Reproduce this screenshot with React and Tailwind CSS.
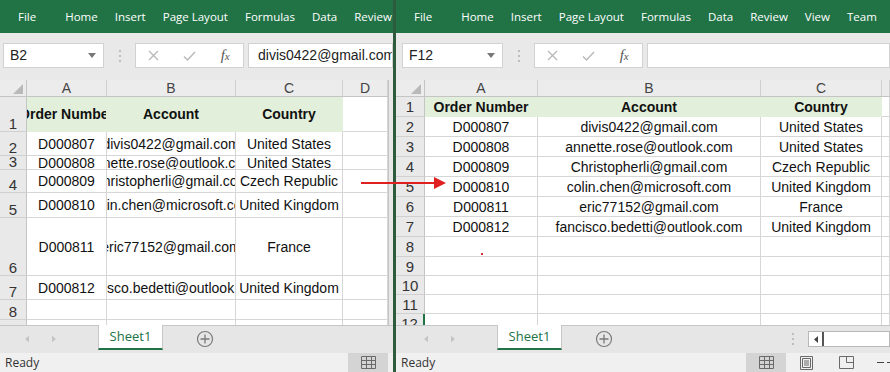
import React from "react";

const CELL = "font-['Liberation_Sans',Arial,sans-serif]";
const UI = "font-['Open_Sans','Noto_Sans',sans-serif]";

const records = [
  ["D000807", "divis0422@gmail.com", "United States"],
  ["D000808", "annette.rose@outlook.com", "United States"],
  ["D000809", "Christopherli@gmail.com", "Czech Republic"],
  ["D000810", "colin.chen@microsoft.com", "United Kingdom"],
  ["D000811", "eric77152@gmail.com", "France"],
  ["D000812", "fancisco.bedetti@outlook.com", "United Kingdom"],
];
const headings = ["Order Number", "Account", "Country"];

const leftCols = [
  { letter: "A", w: "w-[80px]" },
  { letter: "B", w: "w-[129px]" },
  { letter: "C", w: "w-[107px]" },
  { letter: "D", w: "flex-1" },
];
const leftRows = ["h-[35px]", "h-[24px]", "h-[14px]", "h-[23px]", "h-[25px]", "h-[58px]", "h-[24px]", "h-[20px]", "h-[20px]"];

const rightCols = [
  { letter: "A", w: "w-[113px]" },
  { letter: "B", w: "w-[223px]" },
  { letter: "C", w: "w-[121px]" },
  { letter: "", w: "flex-1" },
];
const rightRows = [
  "h-[20px]", "h-[20px]", "h-[20px]", "h-[20px]", "h-[20px]", "h-[20px]",
  "h-[20px]", "h-[20px]", "h-[19px]", "h-[19px]", "h-[19px]", "h-[19px]",
];

function Ribbon({ tabs }) {
  return (
    <div className={`h-[33px] shrink-0 bg-[#217346] flex items-center pl-[18px] text-white text-[11.5px] ${UI}`}>
      {tabs.map((t, i) => (
        <span key={t} className={`whitespace-nowrap ${i === 0 ? "mr-[29px]" : "mr-[17px]"}`}>
          {t}
        </span>
      ))}
    </div>
  );
}

function Dots() {
  return (
    <div className="flex flex-col gap-[3px]">
      <span className="w-[2px] h-[2px] bg-[#bdbdbd]" />
      <span className="w-[2px] h-[2px] bg-[#bdbdbd]" />
      <span className="w-[2px] h-[2px] bg-[#bdbdbd]" />
    </div>
  );
}

function FormulaBar({ name, value, pad }) {
  return (
    <div className={`h-[47px] shrink-0 bg-[#e9e9e9] flex items-start pt-[10px] ${pad} ${CELL}`}>
      <div className="w-[101px] h-[25px] shrink-0 bg-white border border-[#d2d2d2] flex items-center justify-between pl-[6px] pr-[7px] text-[14px] text-[#222]">
        <span>{name}</span>
        <svg width="8" height="5" viewBox="0 0 8 5">
          <path d="M0 0H8L4 5Z" fill="#777" />
        </svg>
      </div>
      <div className="w-[31px] h-[25px] shrink-0 flex items-center justify-center">
        <Dots />
      </div>
      <div className="w-[109px] h-[25px] shrink-0 bg-white border border-[#d2d2d2] flex items-center">
        <div className="w-[36px] flex justify-center">
          <svg width="11" height="11" viewBox="0 0 11 11">
            <path d="M1 1L10 10M10 1L1 10" stroke="#b8b8b8" strokeWidth="1.3" />
          </svg>
        </div>
        <div className="w-[36px] flex justify-center">
          <svg width="13" height="10" viewBox="0 0 13 10">
            <path d="M1 5.5L4.5 9L12 1" stroke="#b8b8b8" strokeWidth="1.4" fill="none" />
          </svg>
        </div>
        <div className="w-[36px] flex justify-center">
          <span className="font-['Liberation_Serif',serif] italic text-[15px] text-[#555] leading-none">
            f<span className="text-[11px]">x</span>
          </span>
        </div>
      </div>
      <div className="ml-[4px] flex-1 min-w-0 h-[25px] bg-white border border-[#d2d2d2] flex items-center pl-[9px] text-[14px] text-[#222] whitespace-nowrap overflow-hidden">
        {value}
      </div>
    </div>
  );
}

function Sheet({ hdrW, cols, rows, bottomNums, activeRow }) {
  return (
    <div className={`flex-1 min-h-0 flex flex-col overflow-hidden bg-white ${CELL}`}>
      <div className="h-[17px] shrink-0 flex bg-[#ececec] border-b border-[#c4c4c4] text-[14px] text-[#444]">
        <div className={`${hdrW} shrink-0 border-r border-[#c4c4c4] flex items-end justify-end pr-[3px] pb-[2px]`}>
          <svg width="10" height="10" viewBox="0 0 10 10">
            <path d="M10 0V10H0Z" fill="#b9b9b9" />
          </svg>
        </div>
        {cols.map((c, i) => (
          <div key={i} className={`${c.w} shrink-0 border-r border-[#d0d0d0] flex items-center justify-center leading-none`}>
            {c.letter}
          </div>
        ))}
      </div>
      <div className="flex-1 min-h-0 overflow-hidden">
        {rows.map((h, r) => {
          const values = r === 0 ? headings : records[r - 1] || [];
          return (
            <div key={r} className={`${h} flex shrink-0`}>
              <div
                className={`${hdrW} shrink-0 bg-[#e9e9e9] border-b border-[#d0d0d0] flex justify-center text-[15px] leading-[15px] text-[#333] overflow-hidden ${
                  bottomNums ? "items-end" : "items-center"
                } ${r + 1 === activeRow ? "bg-[#d6d6d6] border-r-2 border-r-[#217346]" : "border-r border-r-[#c4c4c4]"}`}
              >
                {r + 1}
              </div>
              {cols.map((c, i) => {
                const filled = r === 0 && i < 3;
                return (
                  <div
                    key={i}
                    className={`${c.w} shrink-0 flex items-center justify-center overflow-hidden whitespace-nowrap text-[14px] leading-[14px] text-[#111] border-r border-b ${
                      filled ? "bg-[#e2efda] border-[#e2efda] font-bold" : "border-[#d6d6d6]"
                    }`}
                  >
                    {values[i] && <span className="shrink-0">{values[i]}</span>}
                  </div>
                );
              })}
            </div>
          );
        })}
      </div>
    </div>
  );
}

function Arrow({ dir }) {
  return (
    <svg width="5" height="8" viewBox="0 0 5 8">
      <path d={dir === "l" ? "M5 0V8L0 4Z" : "M0 0V8L5 4Z"} fill="#c4c4c4" />
    </svg>
  );
}

function TabBar({ pad, extras }) {
  return (
    <div className={`h-[28px] shrink-0 bg-[#e6e6e6] border-t border-[#c6c6c6] flex items-start ${pad} ${UI}`}>
      <div className="w-[56px] h-[26px] shrink-0 flex items-center pl-[25px] gap-[23px]">
        <Arrow dir="l" />
        <Arrow dir="r" />
      </div>
      <div className="ml-[42px] -mt-px w-[65px] h-[25px] shrink-0 bg-white border-x border-[#c6c6c6] border-b-2 border-b-[#217346] flex items-center justify-center text-[13px] text-[#217346]">
        Sheet1
      </div>
      <div className="ml-[33px] h-[26px] flex items-center">
        <svg width="18" height="18" viewBox="0 0 18 18">
          <circle cx="9" cy="9" r="7.5" fill="none" stroke="#7a7a7a" strokeWidth="1.2" />
          <path d="M9 4.5V13.5M4.5 9H13.5" stroke="#7a7a7a" strokeWidth="1.3" />
        </svg>
      </div>
      {extras && (
        <>
          <div className="ml-[179px] h-[26px] flex items-center">
            <Dots />
          </div>
          <div className="ml-[14px] mt-[5px] flex-1 h-[16px] flex bg-white border border-[#b8b8b8]">
            <div className="w-[13px] flex items-center justify-center">
              <svg width="4" height="7" viewBox="0 0 4 7">
                <path d="M4 0V7L0 3.5Z" fill="#444" />
              </svg>
            </div>
            <div className="flex-1 border-l-2 border-[#555]" />
          </div>
        </>
      )}
    </div>
  );
}

function GridIcon() {
  return (
    <svg width="15" height="13" viewBox="0 0 15 13">
      <path d="M0.5 0.5H14.5V12.5H0.5Z M0.5 4.5H14.5 M0.5 8.5H14.5 M5.5 0.5V12.5 M10.5 0.5V12.5" stroke="#6a6a6a" fill="none" />
    </svg>
  );
}

function StatusBar({ readyW, extras }) {
  return (
    <div className={`h-[19px] shrink-0 bg-[#f0f0f0] flex items-center text-[12px] text-[#333] ${UI}`}>
      <span className={`pl-[5px] shrink-0 ${readyW}`}>Ready</span>
      <div className="w-[40px] h-[19px] shrink-0 bg-[#d4d4d4] flex items-center justify-center">
        <GridIcon />
      </div>
      {extras && (
        <>
          <div className="w-[40px] shrink-0 flex justify-center">
            <svg width="13" height="14" viewBox="0 0 13 14">
              <path d="M0.5 0.5H12.5V13.5H0.5Z M2.5 2.5H10.5V11.5H2.5Z M4 5H9 M4 7H9 M4 9H9" stroke="#6a6a6a" fill="none" />
            </svg>
          </div>
          <div className="w-[40px] shrink-0 flex justify-center">
            <svg width="15" height="13" viewBox="0 0 15 13">
              <path d="M0.5 0.5H14.5V12.5H0.5Z M7.5 0.5V6.5H14.5" stroke="#6a6a6a" fill="none" />
            </svg>
          </div>
          <div className="ml-[11px] flex items-center gap-[3px]">
            <span className="w-[7px] h-px bg-[#444]" />
            <span className="w-[7px] h-px bg-[#444]" />
          </div>
        </>
      )}
    </div>
  );
}

export default function App() {
  return (
    <div className="relative flex w-[890px] h-[372px] overflow-hidden bg-white">
      <div className="w-[393px] shrink-0 flex flex-col overflow-hidden">
        <Ribbon tabs={["File", "Home", "Insert", "Page Layout", "Formulas", "Data", "Review"]} />
        <FormulaBar name="B2" value="divis0422@gmail.com" pad="pl-[3px]" />
        <div className="flex-1 min-h-0 flex">
          <Sheet hdrW="w-[27px]" cols={leftCols} rows={leftRows} bottomNums />
          <div className="w-[5px] shrink-0 bg-[#e8e8e8] border-l border-[#c4c4c4]" />
        </div>
        <TabBar pad="" />
        <StatusBar readyW="w-[348px]" />
      </div>

      <div className="w-[3px] shrink-0 bg-[#2e5a3e]" />

      <div className="flex-1 min-w-0 flex flex-col overflow-hidden">
        <Ribbon tabs={["File", "Home", "Insert", "Page Layout", "Formulas", "Data", "Review", "View", "Team"]} />
        <FormulaBar name="F12" value="" pad="pl-[6px]" />
        <Sheet hdrW="w-[29px]" cols={rightCols} rows={rightRows} activeRow={12} />
        <TabBar pad="pl-[3px]" extras />
        <StatusBar readyW="w-[350px]" extras />
      </div>

      <svg className="absolute left-[358px] top-[176px]" width="90" height="14" viewBox="0 0 90 14">
        <line x1="3" y1="7" x2="78" y2="7" stroke="#e02020" strokeWidth="2" />
        <path d="M76 1L88 7L76 13Z" fill="#e02020" />
      </svg>
      <div className="absolute left-[481px] top-[253px] w-[2px] h-[2px] bg-[#d83030]" />
    </div>
  );
}
